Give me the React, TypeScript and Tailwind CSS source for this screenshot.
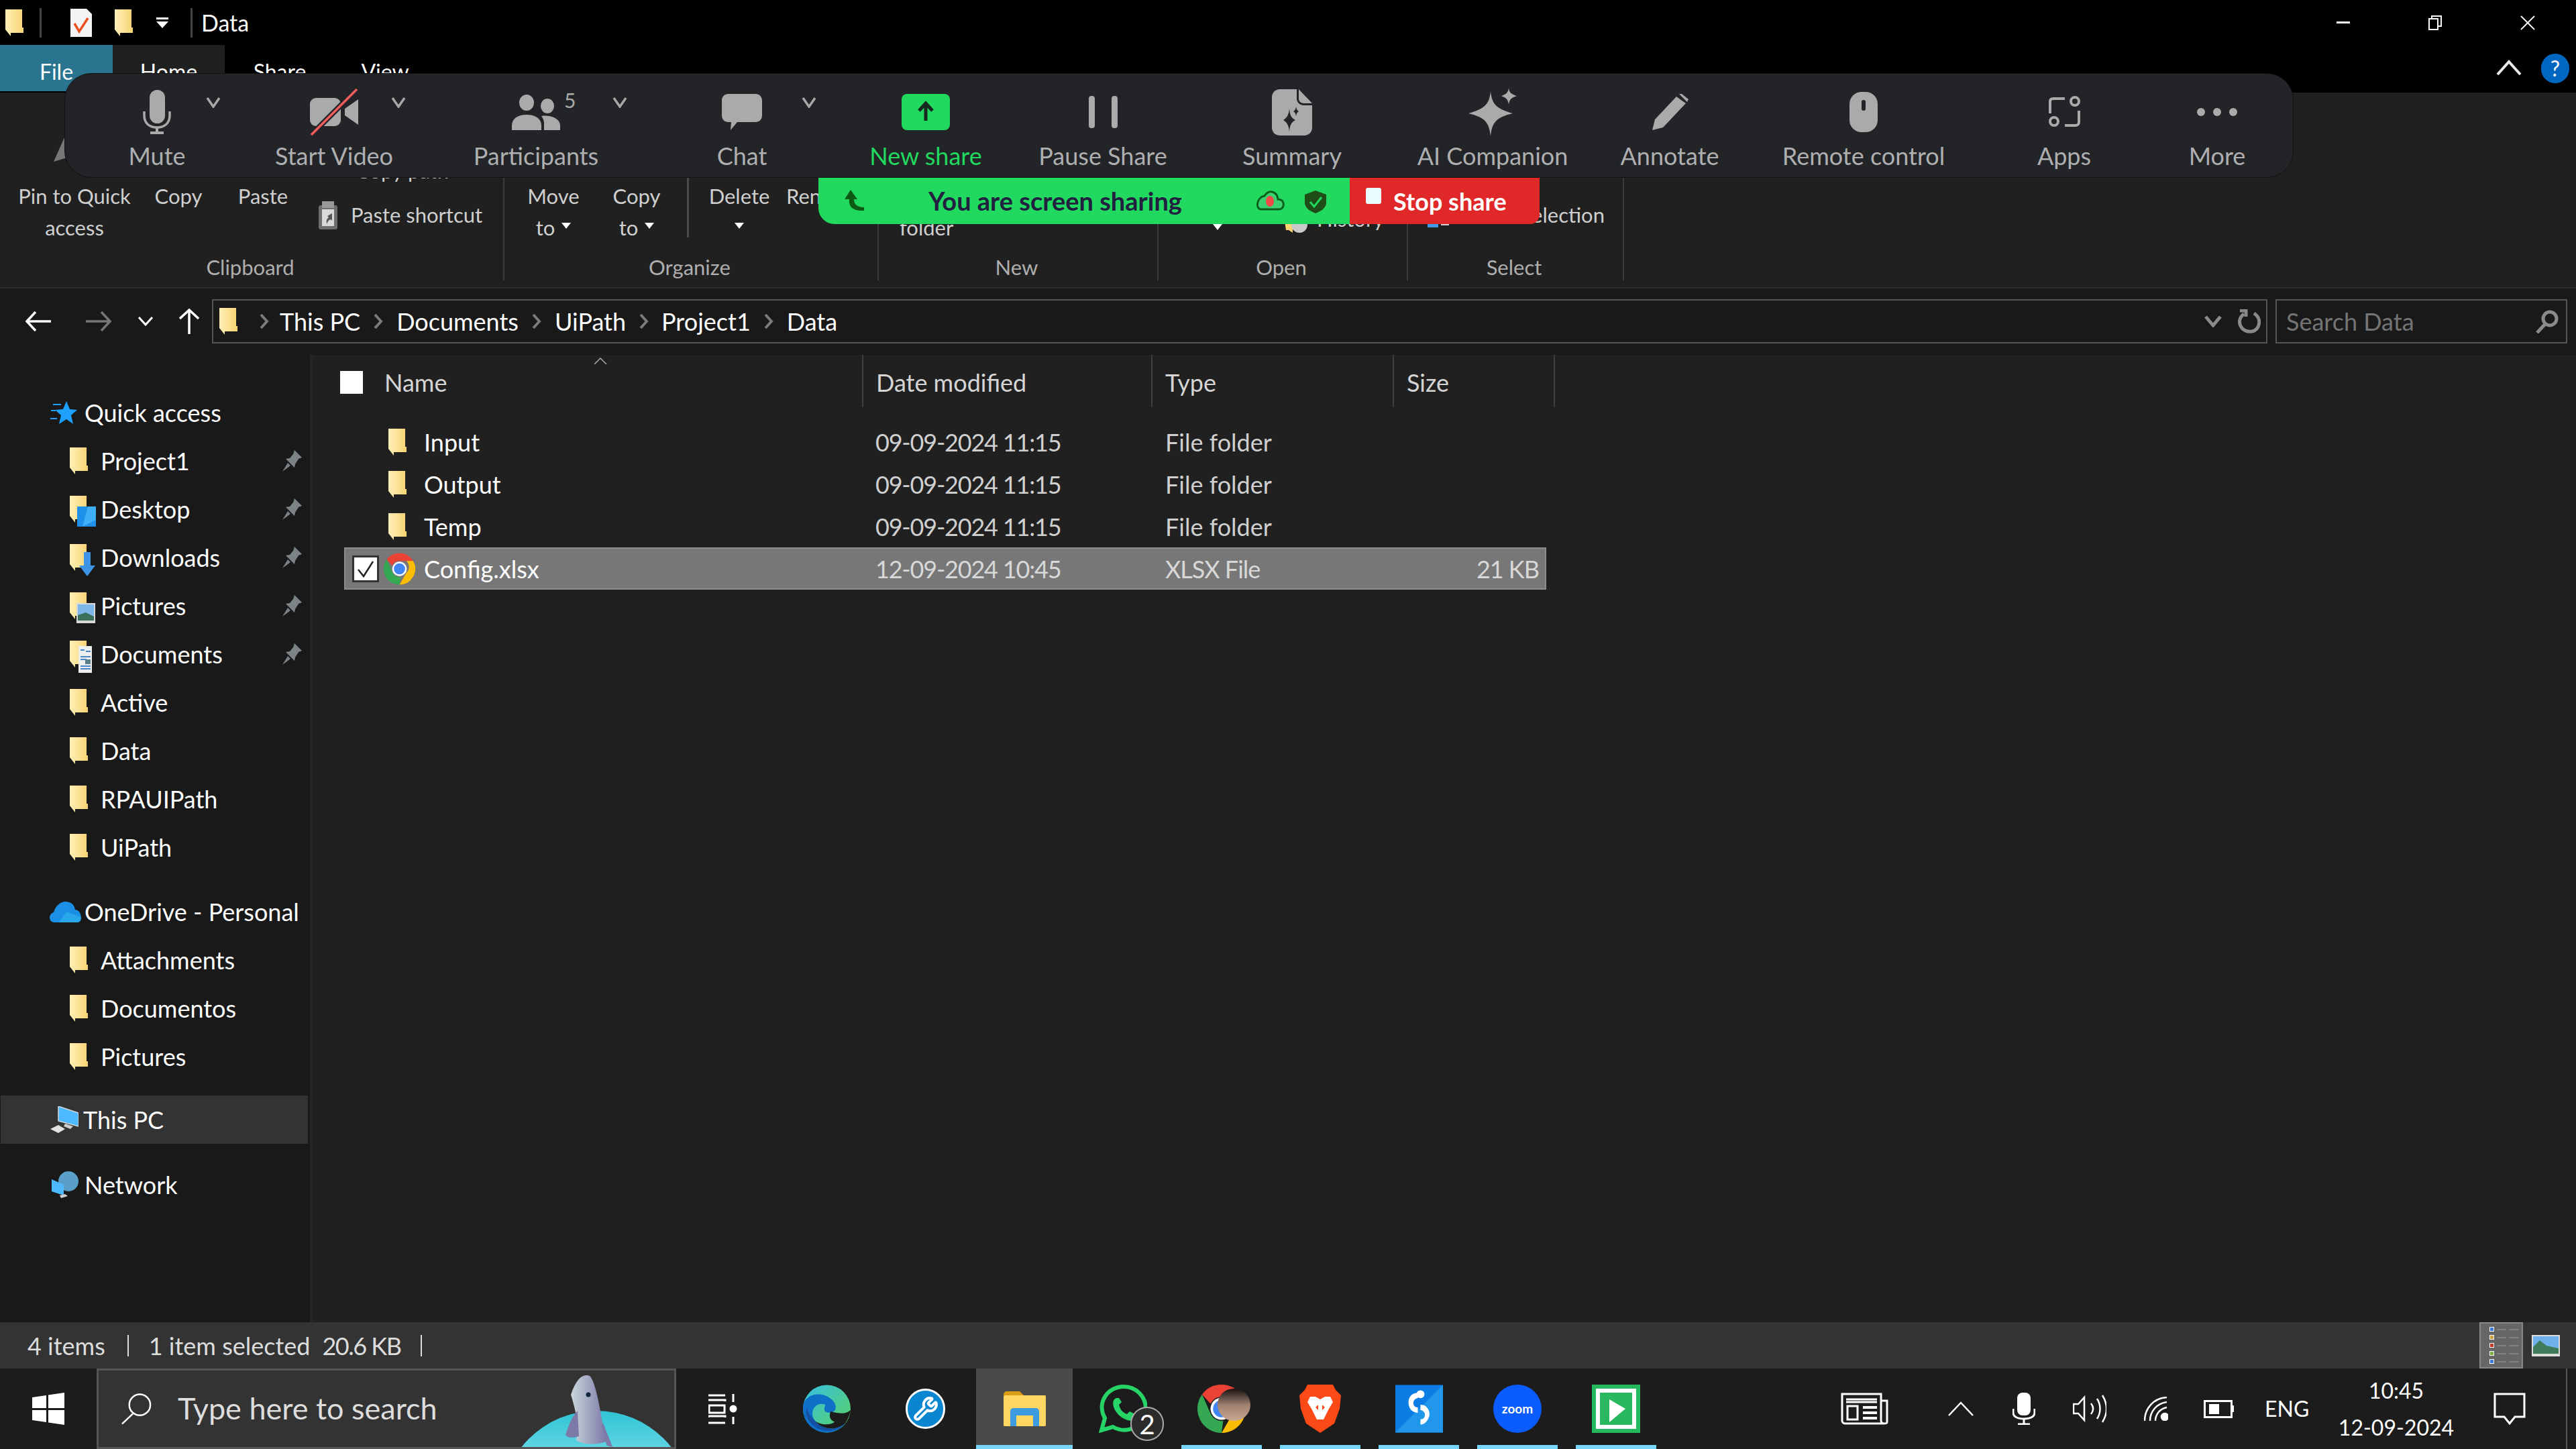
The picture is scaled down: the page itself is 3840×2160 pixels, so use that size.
import { Wrench } from "lucide-react"
import type { ReactNode } from "react"

function Folder({ className = "w-[27px] h-[40px]" }: { className?: string }) {
  return (
    <svg viewBox="0 0 27 40" className={className}>
      <defs>
        <linearGradient id="fld" x1="0" x2="1" y1="0" y2="0">
          <stop offset="0" stopColor="#fff0b8" />
          <stop offset="1" stopColor="#f7d372" />
        </linearGradient>
      </defs>
      <path d="M0 0H25V27H27V35H8V40L0 30Z" fill="url(#fld)" />
    </svg>
  )
}

function Chrome({ className }: { className: string }) {
  return (
    <svg viewBox="0 0 48 48" className={className}>
      <path d="M24 0a24 24 0 0 1 20.8 12H24a12 12 0 0 0-11 7L4.6 9.800A24 24 0 0 1 24 0z" fill="#ea4335" />
      <path d="M44.800 12A24 24 0 0 1 24 48l10.400-18a12 12 0 0 0 0-18z" fill="#fbbc04" />
      <path d="M4.600 9.800 13.600 30a12 12 0 0 0 12 6L24 48A24 24 0 0 1 4.600 9.800z" fill="#34a853" />
      <circle cx="24" cy="24" r="11" fill="#fff" />
      <circle cx="24" cy="24" r="8.500" fill="#4285f4" />
    </svg>
  )
}

function Caret({ className = "" }: { className?: string }) {
  return (
    <svg viewBox="0 0 14 9" className={`w-[14px] h-[9px] ${className}`}>
      <path d="M0 0H14L7 9Z" fill="#fff" />
    </svg>
  )
}

function Chevron({ color = "#a8a8a8" }: { color?: string }) {
  return (
    <svg viewBox="0 0 24 16" className="w-[24px] h-[16px]">
      <path d="M3 1 12 14 21 1" fill="none" stroke={color} strokeWidth="3.500" />
    </svg>
  )
}

function Crumb() {
  return (
    <svg viewBox="0 0 16 24" className="w-[16px] h-[24px]">
      <path d="M3 2 12 12 3 22" fill="none" stroke="#7b7b7b" strokeWidth="4" />
    </svg>
  )
}

function Pin() {
  return (
    <svg viewBox="0 0 30 32" className="w-[30px] h-[32px] ml-auto mr-[12px]">
      <path d="M19 0 30 11 25 13 20 21 19 26 6 13 12 12 17 6ZM9 19 13 23 1 32Z" fill="#7c8387" />
    </svg>
  )
}

function SideRow({ label, icon, pinned, child }: { label: string; icon?: ReactNode; pinned?: boolean; child?: boolean }) {
  return (
    <div className="flex items-center h-[72px] text-white">
      {child ? (
        <div className="relative ml-[104px] mr-[19px] w-[27px] h-[40px]">
          <Folder />
          {icon}
        </div>
      ) : (
        <div className="flex items-center justify-center w-[50px] ml-[72px] mr-[4px]">{icon}</div>
      )}
      <span>{label}</span>
      {pinned && <Pin />}
    </div>
  )
}

function ZoomItem({ label, width, icon, green, children }: { label: string; width: string; icon: ReactNode; green?: boolean; children?: ReactNode }) {
  return (
    <div className={`relative flex flex-col items-center pt-[21px] ${width}`}>
      <div className="flex items-center justify-center h-[72px]">{icon}</div>
      <span className={`mt-[7px] leading-[44px] whitespace-nowrap ${green ? "text-[#22d95f]" : "text-[#aeafb0]"}`}>{label}</span>
      {children}
    </div>
  )
}

function ZoomToolbar() {
  const c = "#a9aaaa"
  return (
    <div className="absolute left-[96px] top-[109px] w-[3323px] h-[156px] flex bg-[#232427] border border-[#111] rounded-[40px]">
      <ZoomItem label="Mute" width="w-[274px]" icon={
        <svg viewBox="0 0 42 66" className="w-[42px] h-[66px]">
          <rect x="10" y="0" width="23" height="50" rx="11.500" fill={c} />
          <path d="M2 32v6c0 12 8 18 19 18s19-6 19-18v-6" fill="none" stroke={c} strokeWidth="3.500" />
          <path d="M21 56v6M11 64h20" stroke={c} strokeWidth="4" />
        </svg>
      }>
        <div className="absolute left-[209px] top-[35px]"><Chevron /></div>
      </ZoomItem>
      <ZoomItem label="Start Video" width="w-[254px]" icon={
        <svg viewBox="0 0 72 70" className="w-[72px] h-[70px]">
          <rect x="0" y="14" width="46" height="42" rx="9" fill={c} />
          <path d="M52 30 72 16V54L52 40Z" fill={c} />
          <path d="M70 1 2 69" stroke="#232427" strokeWidth="8" />
          <path d="M70 1 2 69" stroke="#f25c5c" strokeWidth="3.500" />
        </svg>
      }>
        <div className="absolute left-[211px] top-[35px]"><Chevron /></div>
      </ZoomItem>
      <ZoomItem label="Participants" width="w-[348px]" icon={
        <svg viewBox="0 0 72 53" className="w-[72px] h-[53px]">
          <ellipse cx="22" cy="12" rx="11" ry="12" fill={c} />
          <ellipse cx="53" cy="17" rx="10" ry="11" fill={c} />
          <path d="M0 53V46C0 36 9 30 22 30S44 36 44 46V53Z" fill={c} />
          <path d="M48 53V42C48 38 46 35 44 32 58 30 72 36 72 46V53Z" fill={c} />
        </svg>
      }>
        <span className="absolute left-[216px] top-[17px] text-[30px] text-[#a9aaaa]">5</span>
        <div className="absolute left-[287px] top-[35px]"><Chevron /></div>
      </ZoomItem>
      <ZoomItem label="Chat" width="w-[266px]" icon={
        <svg viewBox="0 0 60 54" className="w-[60px] h-[54px]">
          <path d="M10 0H50C56 0 60 4 60 10V32C60 38 56 42 50 42H23L13 54 14 42H10C4 42 0 38 0 32V10C0 4 4 0 10 0Z" fill={c} />
        </svg>
      }>
        <div className="absolute left-[221px] top-[35px]"><Chevron /></div>
      </ZoomItem>
      <ZoomItem label="New share" width="w-[282px]" green icon={
        <svg viewBox="0 0 72 54" className="w-[72px] h-[54px]">
          <rect width="72" height="54" rx="8" fill="#22d95f" />
          <path d="M36 40V15M26 25 36 14 46 25" fill="none" stroke="#17291f" strokeWidth="5" />
        </svg>
      } />
      <ZoomItem label="Pause Share" width="w-[246px]" icon={
        <svg viewBox="0 0 43 48" className="w-[43px] h-[48px]">
          <rect x="0" width="9" height="48" rx="4" fill={c} />
          <rect x="34" width="9" height="48" rx="4" fill={c} />
        </svg>
      } />
      <ZoomItem label="Summary" width="w-[318px]" icon={
        <svg viewBox="0 0 60 69" className="w-[60px] h-[69px]">
          <path d="M12 0H37V14C37 20 42 24 48 24H60V57C60 64 55 69 48 69H12C5 69 0 64 0 57V12C0 5 5 0 12 0Z" fill={c} />
          <path d="M40 0 60 21H48C43 21 40 18 40 14Z" fill={c} />
          <path d="M26 29C27 38 28 42 35 46 28 50 27 54 26 63 25 54 23 50 17 46 23 42 25 38 26 29Z" fill="#232427" />
          <path d="M36 26C37 30 37 31 40 33 37 35 37 36 36 40 35 36 35 35 32 33 35 31 35 30 36 26Z" fill="#232427" />
        </svg>
      } />
      <ZoomItem label="AI Companion" width="w-[280px]" icon={
        <svg viewBox="0 0 72 72" className="w-[72px] h-[72px]">
          <path d="M33 5C35 24 41 31 66 38 41 44 35 52 33 72 31 52 25 44 0 38 25 31 31 24 33 5Z" fill={c} />
          <path d="M60 0C61 7 63 9 72 12 63 15 61 18 60 25 59 18 57 15 49 12 57 9 59 7 60 0Z" fill={c} />
        </svg>
      } />
      <ZoomItem label="Annotate" width="w-[248px]" icon={
        <svg viewBox="0 0 56 54" className="w-[56px] h-[54px]">
          <path d="M38 4 52 14 18 50 2 54 6 38ZM42 0 46 0 56 8 54 12Z" fill={c} />
        </svg>
      } />
      <ZoomItem label="Remote control" width="w-[330px]" icon={
        <svg viewBox="0 0 42 60" className="w-[42px] h-[60px]">
          <rect width="42" height="60" rx="18" fill={c} />
          <rect x="18" y="12" width="6" height="16" rx="3" fill="#232427" />
        </svg>
      } />
      <ZoomItem label="Apps" width="w-[268px]" icon={
        <svg viewBox="0 0 47 48" className="w-[47px] h-[48px]" fill="none" stroke={c} strokeWidth="4">
          <path d="M2 26V8C2 5 4 4 7 4H24M45 22V39C45 42 43 44 40 44H24" />
          <circle cx="39" cy="8" r="6" />
          <circle cx="8" cy="38" r="6" />
        </svg>
      } />
      <ZoomItem label="More" width="w-[188px]" icon={
        <svg viewBox="0 0 60 12" className="w-[60px] h-[12px]">
          <circle cx="6" cy="6" r="6" fill={c} />
          <circle cx="30" cy="6" r="6" fill={c} />
          <circle cx="54" cy="6" r="6" fill={c} />
        </svg>
      } />
    </div>
  )
}

function ShareBanner() {
  return (
    <div className="absolute left-[1220px] top-[265px] h-[69px] flex font-bold">
      <div className="relative flex items-center w-[792px] bg-[#22d95f] rounded-bl-[24px]">
        <svg viewBox="0 0 32 32" className="absolute left-[38px] top-[18px] w-[32px] h-[32px]">
          <path d="M10 0 20 14H15C15 22 20 26 30 26V31C14 32 7 26 8 14H1Z" fill="#0d5a14" />
        </svg>
        <span className="ml-[164px] text-[38px] text-[#21203f] whitespace-nowrap">You are screen sharing</span>
        <svg viewBox="0 0 46 32" className="absolute left-[650px] top-[17px] w-[46px] h-[32px]">
          <path d="M10 30H36C46 30 46 15 35 15 34 4 22 -1 15 10 3 12 1 30 10 30Z" fill="#3bd16f" stroke="#0a5f1a" strokeWidth="3" />
          <ellipse cx="23" cy="18" rx="6" ry="8" fill="#f24848" />
        </svg>
        <svg viewBox="0 0 32 34" className="absolute left-[725px] top-[19px] w-[32px] h-[34px]">
          <path d="M16 0 32 6V18C32 26 24 31 16 34 8 31 0 26 0 18V6Z" fill="#1f4d17" />
          <path d="M8 17 14 24 25 10" fill="none" stroke="#22d95f" strokeWidth="3" />
        </svg>
      </div>
      <div className="relative flex items-center w-[283px] bg-[#e02828] rounded-br-[14px] text-white">
        <div className="absolute left-[24px] top-[15px] w-[23px] h-[24px] bg-[#e8fbff] rounded-[3px]" />
        <span className="ml-[65px] whitespace-nowrap">Stop share</span>
      </div>
    </div>
  )
}

function RibbonGroup({ label, width, children }: { label: string; width: string; children: ReactNode }) {
  return (
    <div className={`relative flex flex-col h-[280px] border-r-2 border-[#3c3c3c] ${width}`}>
      <div className="flex items-start pt-[131px] h-[237px] leading-[47px] whitespace-nowrap">{children}</div>
      <div className="h-[43px] pr-[4px] leading-[46px] text-center text-[#aeaeae]">{label}</div>
    </div>
  )
}

function Ribbon() {
  return (
    <div className="flex h-[292px] bg-[#202020] border-b-2 border-[#2b2b2b] text-[31px] text-[#cfcfcf]">
      <RibbonGroup label="Clipboard" width="w-[752px]">
        <svg viewBox="0 0 20 36" className="absolute left-[80px] top-[67px] w-[20px] h-[36px]">
          <path d="M16 0 20 8 20 30 0 36Z" fill="#777" />
        </svg>
        <div className="ml-[25px] w-[172px] text-center">Pin to Quick<br />access</div>
        <div className="ml-[29px] w-[80px] text-center">Copy</div>
        <div className="ml-[41px] w-[90px] text-center">Paste</div>
        <div className="ml-[38px] -mt-[38px] flex flex-col">
          <div className="pl-[55px] h-[47px]">Copy path</div>
          <div className="flex items-center mt-[19px] h-[47px]">
            <svg viewBox="0 0 28 42" className="w-[28px] h-[42px] mr-[20px]">
              <rect y="6" width="28" height="36" rx="3" fill="#6d6d6d" />
              <rect x="5" y="0" width="18" height="10" fill="#999" />
              <rect x="5" y="12" width="18" height="25" fill="#d9d9d9" />
              <path d="M20 18 13 22 15 24C11 27 11 31 13 34 13 30 15 28 18 27L20 29Z" fill="#555" />
            </svg>
            Paste shortcut
          </div>
        </div>
      </RibbonGroup>
      <RibbonGroup label="Organize" width="w-[558px]">
        <div className="absolute left-[272px] top-[0px] h-[216px] w-[3px] bg-[#4a4a4a]" />
        <div className="ml-[32px] w-[82px] text-center">Move<br />to <Caret className="inline-block align-[10px] ml-[2px]" /></div>
        <div className="ml-[42px] w-[82px] text-center">Copy<br />to <Caret className="inline-block align-[10px] ml-[2px]" /></div>
        <div className="ml-[66px] w-[92px] text-center">Delete<br /><Caret className="inline-block align-[10px]" /></div>
        <div className="ml-[24px]">Rename</div>
      </RibbonGroup>
      <RibbonGroup label="New" width="w-[417px]">
        <div className="ml-[31px]">New<br />folder</div>
      </RibbonGroup>
      <RibbonGroup label="Open" width="w-[372px]">
        <Caret className="absolute left-[81px] top-[196px]" />
        <div className="ml-[186px] mt-[34px] flex items-center h-[47px]">
          <svg viewBox="0 0 37 40" className="w-[37px] h-[40px] mr-[13px]">
            <path d="M0 10H14V40L8 36H4Z" fill="#f7d372" />
            <circle cx="24" cy="28" r="12" fill="#c9c9c9" />
          </svg>
          History
        </div>
      </RibbonGroup>
      <RibbonGroup label="Select" width="w-[322px]">
        <div className="ml-[29px] mt-[28px] flex items-center h-[47px]">
          <svg viewBox="0 0 32 36" className="w-[32px] h-[36px] mr-[22px]">
            <rect y="30" width="16" height="6" fill="#3f9be8" />
            <rect x="20" y="30" width="12" height="3" fill="#cfcfcf" />
          </svg>
          Invert selection
        </div>
      </RibbonGroup>
    </div>
  )
}

function NavBar() {
  return (
    <div className="flex items-center h-[99px] pb-[2px] bg-[#191919] text-white">
      <svg viewBox="0 0 38 30" className="ml-[38px] w-[38px] h-[30px]" fill="none" stroke="#fff" strokeWidth="3.500">
        <path d="M38 15H3M15 1 2 15 15 29" />
      </svg>
      <svg viewBox="0 0 38 30" className="ml-[52px] w-[38px] h-[30px]" fill="none" stroke="#777" strokeWidth="3.500">
        <path d="M0 15H35M23 1 36 15 23 29" />
      </svg>
      <svg viewBox="0 0 22 14" className="ml-[40px] w-[22px] h-[14px]" fill="none" stroke="#fff" strokeWidth="3">
        <path d="M1 1 11 12 21 1" />
      </svg>
      <svg viewBox="0 0 30 38" className="ml-[39px] w-[30px] h-[38px]" fill="none" stroke="#fff" strokeWidth="3.500">
        <path d="M15 38V3M1 15 15 2 29 15" />
      </svg>
      <div className="flex items-center ml-[19px] w-[3064px] h-[66px] border-2 border-[#555] bg-[#191919]">
        <Folder className="ml-[9px] w-[27px] h-[40px]" />
        <div className="ml-[32px]"><Crumb /></div>
        <span className="ml-[15px]">This PC</span>
        <div className="ml-[19px]"><Crumb /></div>
        <span className="ml-[19px]">Documents</span>
        <div className="ml-[19px]"><Crumb /></div>
        <span className="ml-[19px]">UiPath</span>
        <div className="ml-[19px]"><Crumb /></div>
        <span className="ml-[18px]">Project1</span>
        <div className="ml-[19px]"><Crumb /></div>
        <span className="ml-[19px]">Data</span>
        <svg viewBox="0 0 26 18" className="ml-auto w-[26px] h-[18px]" fill="none" stroke="#8a8a8a" strokeWidth="5">
          <path d="M2 2 13 15 24 2" />
        </svg>
        <svg viewBox="0 0 34 36" className="ml-[24px] mr-[8px] w-[34px] h-[36px]" fill="none" stroke="#8a8a8a" strokeWidth="5">
          <path d="M9 7C2 12 0 21 6 28 12 35 24 35 29 28 34 20 32 11 24 6M3 2H12V11" />
        </svg>
      </div>
      <div className="flex items-center ml-[12px] w-[435px] h-[66px] border-2 border-[#555] pl-[14px] text-[#747474]">
        Search Data
        <svg viewBox="0 0 36 36" className="ml-auto mr-[10px] w-[36px] h-[36px]" fill="none" stroke="#8a8a8a" strokeWidth="5">
          <circle cx="22" cy="14" r="10" />
          <path d="M15 22 3 35" />
        </svg>
      </div>
    </div>
  )
}

function Sidebar() {
  return (
    <div className="w-[462px] pt-[50px] bg-[#191919] overflow-hidden whitespace-nowrap">
      <SideRow label="Quick access" icon={
        <svg viewBox="0 0 40 34" className="w-[40px] h-[34px] -ml-[4px]">
          <path d="M24 0 29 12 40 13 31 21 34 34 24 27 13 34 16 21 7 13 19 12Z" fill="#1ea0ff" />
          <path d="M4 5H16M1 14H8M0 26H10" stroke="#1ea0ff" strokeWidth="2" />
        </svg>
      } />
      <SideRow child pinned label="Project1" />
      <SideRow child pinned label="Desktop" icon={
        <svg viewBox="0 0 28 30" className="absolute left-[11px] top-[16px] w-[28px] h-[30px]">
          <rect width="28" height="30" fill="#1e90e8" />
          <path d="M16 0H28V20L8 30Z" fill="#3fb0f5" />
        </svg>
      } />
      <SideRow child pinned label="Downloads" icon={
        <svg viewBox="0 0 24 36" className="absolute left-[14px] top-[12px] w-[24px] h-[36px]">
          <path d="M7 0H17V20H24L12 36 0 20H7Z" fill="#3b94e6" />
        </svg>
      } />
      <SideRow child pinned label="Pictures" icon={
        <svg viewBox="0 0 28 30" className="absolute left-[10px] top-[16px] w-[28px] h-[30px]">
          <rect width="28" height="30" fill="#d8d8d8" />
          <rect x="2" y="2" width="24" height="24" fill="#7db6ea" />
          <path d="M2 18 14 14 26 20V26H2Z" fill="#3c6f5a" />
        </svg>
      } />
      <SideRow child pinned label="Documents" icon={
        <svg viewBox="0 0 20 40" className="absolute left-[13px] top-[8px] w-[20px] h-[40px]">
          <rect width="20" height="40" fill="#eeeeee" />
          <path d="M3 6H9M11 8H18M3 16H18M3 20H12M3 30H18M3 34H18" stroke="#4a86c8" strokeWidth="2" />
          <rect x="10" y="20" width="8" height="7" fill="#5b7d8a" />
        </svg>
      } />
      <SideRow child label="Active" />
      <SideRow child label="Data" />
      <SideRow child label="RPAUIPath" />
      <SideRow child label="UiPath" />
      <div className="mt-[24px]">
        <SideRow label="OneDrive - Personal" icon={
          <svg viewBox="0 0 48 32" className="w-[48px] h-[32px] shrink-0">
            <path d="M8 32C0 32 -2 20 7 17 10 6 20 -2 30 2 36 4 38 8 39 13 50 14 50 32 42 32Z" fill="#1b8fe6" />
            <path d="M15 32 26 16 48 24C48 29 46 32 42 32Z" fill="#28a8ea" />
          </svg>
        } />
      </div>
      <SideRow child label="Attachments" />
      <SideRow child label="Documentos" />
      <SideRow child label="Pictures" />
      <div className="mt-[22px] flex items-center h-[72px] mx-[1px] mr-[3px] bg-[#333333] text-white">
        <svg viewBox="0 0 42 40" className="ml-[74px] mr-[3px] w-[42px] h-[40px] shrink-0">
          <path d="M12 0 42 10V30L12 22Z" fill="#4fb9ff" stroke="#cfd8dc" strokeWidth="1.500" />
          <path d="M22 26 34 30 30 34 20 30Z" fill="#cfcfcf" />
          <path d="M12 28 22 34 12 40 0 34Z" fill="#e2e2e2" />
        </svg>
        <span className="ml-[4px]">This PC</span>
      </div>
      <div className="mt-[25px]">
        <SideRow label="Network" icon={
          <svg viewBox="0 0 40 40" className="w-[40px] h-[40px] shrink-0">
            <circle cx="25" cy="15" r="15" fill="#5a9fc9" />
            <path d="M0 12 18 20V36L0 30Z" fill="#4fb9ff" />
            <path d="M12 36 20 34 24 37 14 40Z" fill="#d0d0d0" />
          </svg>
        } />
      </div>
    </div>
  )
}

function FileRow({ name, date, type, size, selected }: { name: string; date: string; type: string; size?: string; selected?: boolean }) {
  return (
    <div className={`flex items-center w-[1792px] h-[63px] whitespace-nowrap ${selected ? "bg-[#777777] ring-2 ring-inset ring-[#8d8d8d]" : ""}`}>
      <div className="flex items-center w-[792px] text-white">
        {selected ? (
          <>
            <div className="ml-[12px] flex items-center justify-center w-[40px] h-[40px] bg-white border-[3px] border-[#333]">
              <svg viewBox="0 0 30 30" className="w-[30px] h-[30px]" fill="none" stroke="#222" strokeWidth="2.500">
                <path d="M4 16 12 26 26 4" />
              </svg>
            </div>
            <Chrome className="ml-[7px] w-[47px] h-[48px]" />
            <span className="ml-[13px]">{name}</span>
          </>
        ) : (
          <>
            <Folder className="ml-[66px] w-[27px] h-[40px]" />
            <span className="ml-[26px]">{name}</span>
          </>
        )}
      </div>
      <div className={`w-[432px] tracking-[-1.200px] ${selected ? "text-[#d8d8d8]" : "text-[#cfcfcf]"}`}>{date}</div>
      <div className={`w-[359px] ${selected ? "text-[#d8d8d8] tracking-[-1px]" : "text-[#cfcfcf]"}`}>{type}</div>
      <div className="w-[198px] text-right text-[#d8d8d8] tracking-[-1px]">{size}</div>
    </div>
  )
}

function FileList() {
  return (
    <div className="flex-1 bg-[#202020] border-l-[5px] border-[#252525]">
      <div className="flex h-[78px] text-[#d5d5d5]">
        <div className="relative flex items-center w-[820px] border-r-2 border-[#3f3f3f] pt-[4px]">
          <div className="ml-[40px] w-[34px] h-[34px] bg-white" />
          <span className="ml-[32px]">Name</span>
          <svg viewBox="0 0 20 10" className="absolute left-[418px] top-[4px] w-[20px] h-[10px]" fill="none" stroke="#aaa" strokeWidth="1.500">
            <path d="M1 10 10 1 19 10" />
          </svg>
        </div>
        <div className="flex items-center w-[431px] pl-[19px] pt-[4px] border-r-2 border-[#3f3f3f]">Date modified</div>
        <div className="flex items-center w-[360px] pl-[19px] pt-[4px] border-r-2 border-[#3f3f3f]">Type</div>
        <div className="flex items-center w-[240px] pl-[19px] pt-[4px] border-r-2 border-[#3f3f3f]">Size</div>
      </div>
      <div className="mt-[20px] ml-[46px]">
        <FileRow name="Input" date="09-09-2024 11:15" type="File folder" />
        <FileRow name="Output" date="09-09-2024 11:15" type="File folder" />
        <FileRow name="Temp" date="09-09-2024 11:15" type="File folder" />
        <FileRow selected name="Config.xlsx" date="12-09-2024 10:45" type="XLSX File" size="21 KB" />
      </div>
    </div>
  )
}

function StatusBar() {
  return (
    <div className="flex items-center h-[69px] bg-[#333333] text-[#dddddd] whitespace-nowrap">
      <span className="ml-[41px]">4 items</span>
      <div className="ml-[33px] w-[2px] h-[32px] bg-[#dddddd]" />
      <span className="ml-[30px]">1 item selected</span>
      <span className="ml-[18px] tracking-[-1.500px]">20.6 KB</span>
      <div className="ml-[30px] w-[2px] h-[32px] bg-[#dddddd]" />
      <div className="ml-auto flex flex-col justify-center gap-[5px] pl-[13px] w-[65px] h-full bg-[#666666] border-2 border-[#888]">
        {["#3a7bd5", "#c9a23c", "#c0392b", "#7cb342", "#3a7bd5"].map((color, i) => (
          <div key={i} className="flex items-center gap-[4px]">
            <div className="w-[7px] h-[7px] border border-white" style={{ backgroundColor: color }} />
            <div className="w-[14px] h-[2px] bg-[#808080]" />
            <div className="w-[14px] h-[2px] bg-[#808080]" />
          </div>
        ))}
      </div>
      <svg viewBox="0 0 42 32" className="ml-[13px] mr-[24px] w-[42px] h-[32px]">
        <rect width="42" height="32" fill="#ddd" />
        <rect x="2" y="2" width="38" height="26" fill="#6fb1ea" />
        <path d="M2 18 12 8 22 16 40 20V28H2Z" fill="#3f7a5a" />
      </svg>
    </div>
  )
}

function Tile({ children, active, running = true, margin }: { children: ReactNode; active?: boolean; running?: boolean; margin: string }) {
  return (
    <div className={`relative flex items-center justify-center h-full ${margin} ${active ? "w-[144px] bg-[#4a4a4a]" : "w-[120px]"}`}>
      {children}
      {running && <div className="absolute left-0 right-0 bottom-0 h-[6px] bg-[#76d6fa]" />}
    </div>
  )
}

function Taskbar() {
  return (
    <div className="flex items-center h-[120px] bg-[#1c1c1c] text-white whitespace-nowrap">
      <svg viewBox="0 0 48 48" className="ml-[48px] w-[48px] h-[48px]">
        <path d="M0 7 21 4V23H0ZM24 3.500 48 0V23H24ZM0 26H21V44L0 41ZM24 26H48V48L24 44.500Z" fill="#fff" />
      </svg>
      <div className="relative flex items-center ml-[48px] w-[864px] h-full bg-[#333333] border-[3px] border-[#555555] overflow-hidden">
        <svg viewBox="0 0 48 48" className="ml-[33px] w-[47px] h-[48px]" fill="none" stroke="#fff" strokeWidth="2.500">
          <circle cx="29" cy="18" r="16" />
          <path d="M19 31 2 47" />
        </svg>
        <span className="ml-[38px] text-[45px] text-[#dddddd]">Type here to search</span>
        <svg viewBox="0 0 228 111" className="absolute left-[628px] top-[6px] w-[228px] h-[111px]">
          <defs>
            <linearGradient id="dome" x1="0" x2="0" y1="0" y2="1">
              <stop offset="0" stopColor="#2fc4d4" />
              <stop offset="0.400" stopColor="#8fe6f4" />
            </linearGradient>
            <linearGradient id="dol" x1="0" x2="1" y1="0" y2="0">
              <stop offset="0" stopColor="#c9d7dc" />
              <stop offset="1" stopColor="#7d7aa8" />
            </linearGradient>
          </defs>
          <circle cx="114" cy="196" r="142" fill="url(#dome)" />
          <path d="M76 30C84 6 94 -2 104 2 112 10 118 40 128 100 112 106 92 104 84 98 88 70 82 50 76 30Z" fill="url(#dol)" />
          <path d="M68 90C74 70 80 60 86 54L88 92C80 94 74 96 68 90Z" fill="#7d7aa8" />
          <path d="M124 72C128 84 134 96 138 108L130 106C126 96 124 84 122 76Z" fill="#7d7aa8" />
          <circle cx="102" cy="30" r="3.500" fill="#10253b" />
        </svg>
      </div>
      <svg viewBox="0 0 47 45" className="ml-[48px] w-[47px] h-[45px]" fill="none" stroke="#fff" strokeWidth="3">
        <path d="M0 2H25M0 9H25V11M0 35V33H25V35M0 43H25" />
        <rect x="1" y="17" width="23" height="11" />
        <path d="M37 0V12M37 34V45" />
        <circle cx="37" cy="22" r="4" fill="#fff" />
      </svg>
      <svg viewBox="0 0 72 72" className="ml-[94px] w-[71px] h-[72px]">
        <defs>
          <linearGradient id="edge" x1="0" x2="1" y1="0" y2="1">
            <stop offset="0" stopColor="#36c0e4" />
            <stop offset="1" stopColor="#5ad35f" />
          </linearGradient>
        </defs>
        <circle cx="36" cy="36" r="36" fill="url(#edge)" />
        <path d="M0 36C0 14 24 10 38 18 54 28 52 42 40 42 30 42 32 34 34 30 20 24 8 40 18 54 28 68 50 70 64 58 56 68 46 72 36 72 16 72 0 56 0 36Z" fill="#0e6fc9" />
        <path d="M42 40C56 44 66 44 72 38 72 40 70 48 64 58 50 70 28 68 18 54 24 60 40 62 48 56 42 54 38 48 42 40Z" fill="#1c1c1c" />
        <path d="M18 54C28 68 50 70 64 58 50 74 20 74 8 52 4 44 4 40 6 34 8 44 12 48 18 54Z" fill="#1450a3" />
      </svg>
      <div className="ml-[82px] flex items-center justify-center w-[59px] h-[60px] rounded-full bg-[#0a86d0] border-[3px] border-white">
        <Wrench className="w-[38px] h-[38px] text-white" strokeWidth={2.500} />
      </div>
      <Tile active margin="ml-[46px]">
        <svg viewBox="0 0 63 52" className="w-[63px] h-[52px]">
          <path d="M0 6C0 2 2 0 5 0H24L30 6H63V52H0Z" fill="#d99d12" />
          <rect y="6" width="63" height="46" rx="3" fill="#ffd661" />
          <path d="M10 52V30C10 27 12 25 15 25H48C51 25 53 27 53 30V52H44V36H19V52Z" fill="#3f9be0" />
        </svg>
      </Tile>
      <Tile running={false} margin="ml-[15px]">
        <svg viewBox="0 0 72 72" className="w-[72px] h-[72px]">
          <path d="M4 68 9 50C-4 26 14 3 37 3 56 3 70 18 70 36 70 60 44 76 21 63Z" fill="none" stroke="#25d366" strokeWidth="6" />
          <path d="M26 20C20 22 20 30 24 38 30 48 40 54 50 54 54 52 56 48 54 44L46 40 42 44C36 42 32 38 30 30L34 26 30 20Z" fill="#25d366" />
        </svg>
        <div className="absolute left-[71px] top-[57px] flex items-center justify-center w-[50px] h-[51px] rounded-full bg-[#2b2b2b] border-2 border-[#aaa] text-[40px] leading-none">2</div>
      </Tile>
      <Tile margin="ml-[27px]">
        <Chrome className="w-[72px] h-[72px]" />
        <div className="absolute left-[54px] top-[30px] w-[49px] h-[48px] rounded-full bg-gradient-to-b from-[#1a1412] via-[#a08070] to-[#c8a890]" />
      </Tile>
      <Tile margin="ml-[27px]">
        <svg viewBox="0 0 62 72" className="w-[62px] h-[72px]">
          <path d="M12 0H50L54 8 62 16 60 36 52 58 31 72 10 58 2 36 0 16 8 8Z" fill="#fb4a17" />
          <path d="M16 18H24L31 22 38 18H46L50 26 44 36 40 44 36 52H26L22 44 18 36 12 26ZM28 30 24 34 28 38ZM34 30V38L38 34Z" fill="#fff" fillRule="evenodd" />
        </svg>
      </Tile>
      <Tile margin="ml-[27px]">
        <svg viewBox="0 0 72 72" className="w-[71px] h-[72px]">
          <rect width="72" height="72" fill="#0b7de4" />
          <path d="M72 0V72H0Z" fill="#2aa3ee" opacity="0.700" />
          <path d="M34 12C20 12 16 28 24 38 28 42 34 42 34 42V34C28 34 26 28 28 24 30 20 34 20 34 20Z" fill="#fff" />
          <path d="M38 30C50 30 56 44 48 54 44 60 38 60 38 60V52C44 52 46 46 44 42 42 38 38 38 38 38Z" fill="#fff" />
          <circle cx="38" cy="14" r="6" fill="#fff" />
        </svg>
      </Tile>
      <Tile margin="ml-[27px]">
        <div className="flex items-center justify-center w-[72px] h-[72px] rounded-full bg-[#0b5cff] text-[19px] font-bold">zoom</div>
      </Tile>
      <Tile margin="ml-[27px]">
        <svg viewBox="0 0 72 72" className="w-[72px] h-[72px]">
          <rect width="72" height="72" fill="#25b85c" />
          <rect x="6" y="6" width="60" height="60" fill="#fff" />
          <rect x="12" y="12" width="48" height="48" fill="#2ab85f" />
          <path d="M26 22 50 36 26 56Z" fill="#fff" />
        </svg>
      </Tile>
      <svg viewBox="0 0 71 48" className="ml-[275px] w-[71px] h-[48px]" fill="none" stroke="#fff" strokeWidth="3">
        <path d="M2 2H60V42C60 44 62 46 64 46H6C4 46 2 44 2 42ZM60 12H69V44C69 46 66 46 64 46" />
        <path d="M8 10H54M8 14H54" />
        <rect x="10" y="20" width="15" height="20" />
        <path d="M33 22H54M33 30H54M33 38H54" strokeWidth="4" />
      </svg>
      <svg viewBox="0 0 38 22" className="ml-[89px] w-[38px] h-[22px]" fill="none" stroke="#fff" strokeWidth="2.500">
        <path d="M1 21 19 2 37 21" />
      </svg>
      <svg viewBox="0 0 34 48" className="ml-[58px] w-[34px] h-[48px]">
        <rect x="7" y="0" width="20" height="34" rx="8" fill="#fff" />
        <path d="M1 24V30C1 36 8 39 17 39S33 36 33 30V24M17 39V46M8 47H26" fill="none" stroke="#fff" strokeWidth="3" />
      </svg>
      <svg viewBox="0 0 50 42" className="ml-[56px] w-[50px] h-[42px]" fill="none" stroke="#fff" strokeWidth="2.500">
        <path d="M1 14H8L17 4V38L8 28H1ZM27 13C31 18 31 24 27 29M36 6C42 15 42 27 36 36M44 1C52 14 52 28 44 41" />
      </svg>
      <svg viewBox="0 0 36 36" className="ml-[56px] w-[36px] h-[36px]" fill="none" stroke="#fff" strokeWidth="2.500">
        <path d="M1 36C1 18 14 2 34 1M9 36C9 22 19 10 34 8M17 36C17 26 24 18 34 16" />
        <circle cx="31" cy="30" r="5" fill="#fff" />
      </svg>
      <div className="ml-[53px] flex items-center w-[43px] h-[27px] border-[3px] border-white relative pl-[5px]">
        <div className="w-[15px] h-[15px] bg-white" />
        <div className="absolute -right-[5px] top-[5px] w-[2px] h-[10px] bg-white" />
      </div>
      <span className="ml-[48px] w-[67px] text-[32px]">ENG</span>
      <div className="flex flex-col items-center w-[260px] -ml-[1px] text-[32px] leading-[55px]">
        <span>10:45</span>
        <span>12-09-2024</span>
      </div>
      <svg viewBox="0 0 48 48" className="ml-[15px] w-[48px] h-[48px]" fill="none" stroke="#fff" strokeWidth="3">
        <path d="M2 2H46V36H32L24 46 16 36H2Z" />
      </svg>
      <div className="ml-[60px] w-[2px] h-full bg-[#555]" />
    </div>
  )
}

export default function App() {
  return (
    <div className="relative flex flex-col w-[3840px] h-[2160px] overflow-hidden bg-black text-[36px] [font-family:Lato,'Liberation_Sans',sans-serif]">
      <div className="relative flex items-center h-[67px] text-white">
        <Folder className="ml-[8px] w-[27px] h-[40px]" />
        <div className="ml-[24px] w-[3px] h-[44px] bg-[#444]" />
        <svg viewBox="0 0 32 42" className="ml-[43px] w-[32px] h-[42px]">
          <path d="M0 0H24L32 8V42H0Z" fill="#f4f4f4" />
          <path d="M6 22 13 34 26 14" fill="none" stroke="#e8501f" strokeWidth="3.500" />
        </svg>
        <Folder className="ml-[34px] w-[27px] h-[40px]" />
        <svg viewBox="0 0 18 16" className="ml-[35px] w-[18px] h-[16px]">
          <path d="M0 0H18V3H0ZM0 6H18L9 16Z" fill="#fff" />
        </svg>
        <div className="ml-[33px] w-[3px] h-[44px] bg-[#444]" />
        <span className="ml-[13px] text-[34px]">Data</span>
        <div className="ml-auto w-[20px] h-[3px] bg-white mr-[117px]" />
        <svg viewBox="0 0 20 22" className="w-[20px] h-[22px] mr-[117px]" fill="none" stroke="#fff" strokeWidth="2">
          <rect x="1" y="5" width="13" height="16" />
          <path d="M5 5V1H19V16H14" />
        </svg>
        <svg viewBox="0 0 22 22" className="w-[22px] h-[22px] mr-[61px]" fill="none" stroke="#fff" strokeWidth="1.800">
          <path d="M1 1 21 21M21 1 1 21" />
        </svg>
      </div>
      <div className="relative flex h-[71px] text-white text-[32px] pb-[2px]">
        <div className="flex justify-center pt-[16px] w-[168px] bg-[#29758f]">File</div>
        <div className="flex justify-center pt-[16px] w-[167px] bg-[#202020]">Home</div>
        <div className="flex justify-center pt-[16px] w-[164px]">Share</div>
        <div className="flex justify-center pt-[16px] w-[150px]">View</div>
        <svg viewBox="0 0 38 24" className="ml-auto mt-[22px] w-[38px] h-[24px]" fill="none" stroke="#e8e8e8" strokeWidth="4">
          <path d="M2 22 19 3 36 22" />
        </svg>
        <div className="ml-[29px] mr-[10px] mt-[13px] flex items-center justify-center w-[42px] h-[44px] rounded-full bg-[#0067c0] text-[32px]">?</div>
      </div>
      <Ribbon />
      <NavBar />
      <div className="flex flex-1 min-h-0">
        <Sidebar />
        <FileList />
      </div>
      <StatusBar />
      <Taskbar />
      <ZoomToolbar />
      <ShareBanner />
    </div>
  )
}
